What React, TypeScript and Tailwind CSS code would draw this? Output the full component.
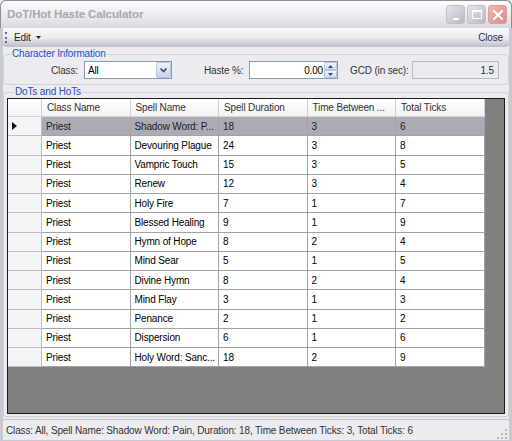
import { clsx } from 'clsx';

const ROWS = [
  ['Priest', 'Shadow Word: P...', '18', '3', '6'],
  ['Priest', 'Devouring Plague', '24', '3', '8'],
  ['Priest', 'Vampric Touch', '15', '3', '5'],
  ['Priest', 'Renew', '12', '3', '4'],
  ['Priest', 'Holy Fire', '7', '1', '7'],
  ['Priest', 'Blessed Healing', '9', '1', '9'],
  ['Priest', 'Hymn of Hope', '8', '2', '4'],
  ['Priest', 'Mind Sear', '5', '1', '5'],
  ['Priest', 'Divine Hymn', '8', '2', '4'],
  ['Priest', 'Mind Flay', '3', '1', '3'],
  ['Priest', 'Penance', '2', '1', '2'],
  ['Priest', 'Dispersion', '6', '1', '6'],
  ['Priest', 'Holy Word: Sanc...', '18', '2', '9'],
];

const COLUMNS = ['Class Name', 'Spell Name', 'Spell Duration', 'Time Between ...', 'Total Ticks'];

export default function App() {
  return (
    <div
      className="flex h-[441px] w-[512px] flex-col overflow-hidden whitespace-nowrap bg-[#ecebef] text-[10px] tracking-[-0.15px] text-black"
      style={{ fontFamily: '"Liberation Sans", Arial, sans-serif' }}
    >
      {/* Title bar */}
      <div className="flex h-[28px] items-center rounded-t-[6px] border-x border-t border-[#8d8d9c] bg-gradient-to-b from-[#fdfdfe] via-[#ececf1] to-[#d9d9e1] pl-[6px] pr-[4px]">
        <span className="flex-1 text-[11.5px] font-bold tracking-[-0.1px] text-[#a7a7ad]">
          DoT/Hot Haste Calculator
        </span>
        <div className="flex gap-[2px]">
          <TitleButton>
            <div className="mt-[8px] h-[2px] w-[6px] bg-white" />
          </TitleButton>
          <TitleButton>
            <div className="h-[9px] w-[10px] border border-t-2 border-white" />
          </TitleButton>
          <TitleButton close>
            <svg width="12" height="12" viewBox="0 0 12 12" fill="none">
              <path d="M2 2l8 8M10 2l-8 8" stroke="white" strokeWidth="2" strokeLinecap="round" />
            </svg>
          </TitleButton>
        </div>
      </div>

      <div className="flex flex-1 flex-col border-x-[3px] border-b-[1px] border-[#c9c9d2]">
        {/* Toolbar */}
        <div className="flex h-[19px] items-center rounded-b-[3px] bg-gradient-to-b from-[#fbfbfc] via-[#ebebf0] to-[#bdbdcc] pr-[6px] text-[#222]">
          <div className="ml-[2px] flex h-[13px] flex-col justify-between py-[1px]">
            <span className="h-[2px] w-[2px] bg-[#6b6b80]" />
            <span className="h-[2px] w-[2px] bg-[#6b6b80]" />
            <span className="h-[2px] w-[2px] bg-[#6b6b80]" />
          </div>
          <span className="ml-[7px]">Edit</span>
          <svg width="5" height="3" viewBox="0 0 5 3" className="ml-[5px]">
            <path d="M0 0h5L2.5 3z" fill="#222" />
          </svg>
          <span className="ml-auto text-[#333]">Close</span>
        </div>

        {/* Character Information */}
        <fieldset className="mt-[1px] h-[37px] rounded-[3px] border border-[#d0d0d6] p-0">
          <legend className="ml-[7px] px-[1px] text-[10px] leading-[12px] text-[#1f4fc4]">
            Character Information
          </legend>
          <div className="flex h-[20px] items-center text-[#333]">
            <span className="ml-[47px] w-[30px]">Class:</span>
            <div className="ml-[3px] flex h-[18px] w-[88px] items-center border border-[#7f9db9] bg-white pl-[3px]">
              <span className="flex-1 text-black">All</span>
              <div className="flex h-[16px] w-[15px] items-center justify-center rounded-[2px] border border-[#b8c4dc] bg-gradient-to-b from-[#f2f4fa] to-[#c9d2e8]">
                <svg width="9" height="7" viewBox="0 0 9 7" fill="none">
                  <path d="M1.5 1.5l3 3 3-3" stroke="#3a4a6a" strokeWidth="1.6" />
                </svg>
              </div>
            </div>
            <span className="ml-[32px] w-[45px]">Haste %:</span>
            <div className="flex h-[18px] w-[89px] items-center border border-[#7f9db9] bg-white">
              <span className="flex-1 pr-[1px] text-right text-black">0.00</span>
              <div className="flex h-[16px] w-[13px] flex-col">
                <div className="flex flex-1 items-center justify-center rounded-[1px] border border-[#b8c4dc] bg-gradient-to-b from-[#f2f4fa] to-[#d2d9ec]">
                  <svg width="5" height="3" viewBox="0 0 5 3">
                    <path d="M0 3h5L2.5 0z" fill="#3a4a6a" />
                  </svg>
                </div>
                <div className="flex flex-1 items-center justify-center rounded-[1px] border border-[#b8c4dc] bg-gradient-to-b from-[#f2f4fa] to-[#d2d9ec]">
                  <svg width="5" height="3" viewBox="0 0 5 3">
                    <path d="M0 0h5L2.5 3z" fill="#3a4a6a" />
                  </svg>
                </div>
              </div>
            </div>
            <span className="ml-[12px] w-[62px]">GCD (in sec):</span>
            <div className="flex h-[18px] w-[87px] items-center justify-end border border-[#b9b9c0] bg-[#ebebef] pr-[4px] text-[#333]">
              1.5
            </div>
          </div>
        </fieldset>

        {/* DoTs and HoTs */}
        <fieldset className="mt-[1px] flex min-h-0 flex-1 flex-col rounded-[3px] border border-[#d0d0d6] px-[3px] pb-[2px] pt-0">
          <legend className="ml-[7px] px-[1px] text-[10px] leading-[12px] text-[#1f4fc4]">
            DoTs and HoTs
          </legend>
          <div className="flex flex-1 flex-col border border-[#1b1b1b] bg-[#808080]">
            {/* header */}
            <div className="flex h-[18px] w-[477px] border-b border-[#d5d5d5] bg-gradient-to-b from-white to-[#f3f3f6]">
              <div className="w-[34px] border-r border-[#d0d0d0]" />
              {COLUMNS.map((c) => (
                <div
                  key={c}
                  className="flex w-[88.5px] items-center overflow-hidden border-r border-[#d0d0d0] pl-[5px] text-[#333]"
                >
                  {c}
                </div>
              ))}
            </div>
            {ROWS.map((r, i) => (
              <div key={i} className="flex h-[19.25px] w-[477px]">
                <div className="flex w-[34px] items-center border-b border-r border-[#bdbdc4] bg-[#f4f4f7] pl-[4px]">
                  {i === 0 && (
                    <svg width="5" height="8" viewBox="0 0 5 8">
                      <path d="M0 0l5 4-5 4z" fill="#111" />
                    </svg>
                  )}
                </div>
                {r.map((v, j) => (
                  <div
                    key={j}
                    className={clsx(
                      'flex w-[88.5px] items-center overflow-hidden border-b border-r border-[#a3a3a3] pl-[4px]',
                      i === 0 ? 'bg-[#aaabb4] text-[#222]' : 'bg-white text-black'
                    )}
                  >
                    {v}
                  </div>
                ))}
              </div>
            ))}
          </div>
        </fieldset>

        {/* Status bar */}
        <div className="mt-[2px] flex h-[21px] items-center border-t border-[#c4c4cc] bg-[#ecebef] pl-[3px] text-[#333]">
          <span className="flex-1">
            Class: All, Spell Name: Shadow Word: Pain, Duration: 18, Time Between Ticks: 3, Total Ticks: 6
          </span>
          <svg width="10" height="10" viewBox="0 0 10 10" className="mr-[2px] mt-[8px]">
            <rect x="8" y="0" width="2" height="2" fill="#b5b5bd" />
            <rect x="8" y="4" width="2" height="2" fill="#b5b5bd" />
            <rect x="4" y="4" width="2" height="2" fill="#b5b5bd" />
            <rect x="8" y="8" width="2" height="2" fill="#b5b5bd" />
            <rect x="4" y="8" width="2" height="2" fill="#b5b5bd" />
            <rect x="0" y="8" width="2" height="2" fill="#b5b5bd" />
          </svg>
        </div>
      </div>
    </div>
  );
}

function TitleButton({ children, close }: { children: React.ReactNode; close?: boolean }) {
  return (
    <div
      className={clsx(
        'flex h-[19px] w-[19px] items-center justify-center rounded-[3px] border',
        close
          ? 'border-[#d9a0a0] bg-gradient-to-br from-[#f1b9b4] to-[#dc8a84]'
          : 'border-[#c0c0cc] bg-gradient-to-br from-[#e6e6ec] to-[#b9b9c6]'
      )}
    >
      {children}
    </div>
  );
}
